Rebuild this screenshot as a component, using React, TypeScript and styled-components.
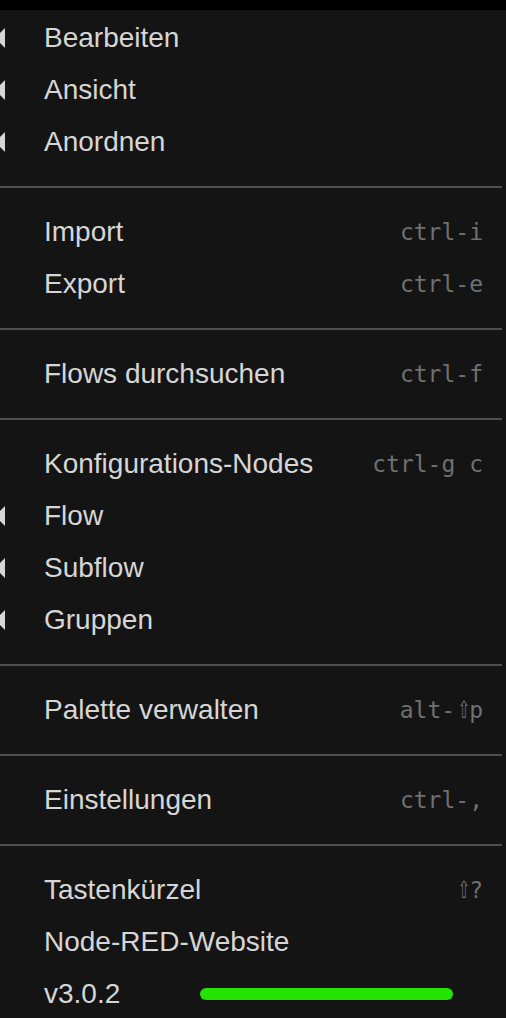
import React from "react";
import styled, { createGlobalStyle } from "styled-components";

const GlobalStyle = createGlobalStyle`
  html, body {
    margin: 0;
    padding: 0;
    background: #141414;
    overflow: hidden;
  }
`;

const TopBar = styled.div`
  height: 10px;
  background: #000;
`;

const Menu = styled.ul`
  list-style: none;
  margin: 0;
  padding: 2px 0 0 0;
  width: 502px;
  background: #141414;
  font-family: "Liberation Sans", Arial, sans-serif;
  font-size: 28px;
  color: #d6d6d6;
`;

const Item = styled.li<{ $submenu?: boolean }>`
  position: relative;
  display: flex;
  align-items: center;
  justify-content: space-between;
  height: 52px;
  padding: 0 19px 0 45px;
  box-sizing: border-box;

  &::before {
    content: "";
    display: ${(p) => (p.$submenu ? "block" : "none")};
    position: absolute;
    left: -5px;
    top: 50%;
    margin-top: -10px;
    border-style: solid;
    border-width: 10px 10px 10px 0;
    border-color: transparent #d6d6d6 transparent transparent;
  }
`;

const Label = styled.span`
  margin-left: -1px;
`;

const Shortcut = styled.span`
  font-family: "DejaVu Sans Mono", "Liberation Mono", monospace;
  font-size: 23px;
  color: #707070;
  white-space: pre;
`;

const Shift = styled.span`
  display: inline-block;
  width: 14px;
  text-align: center;
  font-family: "DejaVu Sans", sans-serif;
  font-size: 24px;
  transform: scaleX(0.62);
`;

const Divider = styled.li`
  height: 2px;
  margin: 18px 0;
  background: #4f4f4f;
`;

const Progress = styled.div`
  width: 253px;
  height: 12px;
  border-radius: 6px;
  background: #22e400;
  margin-right: 30px;
`;

type Entry = { label: string; key?: string; sub?: boolean } | "divider";

const entries: Entry[] = [
  { label: "Bearbeiten", sub: true },
  { label: "Ansicht", sub: true },
  { label: "Anordnen", sub: true },
  "divider",
  { label: "Import", key: "ctrl-i" },
  { label: "Export", key: "ctrl-e" },
  "divider",
  { label: "Flows durchsuchen", key: "ctrl-f" },
  "divider",
  { label: "Konfigurations-Nodes", key: "ctrl-g c" },
  { label: "Flow", sub: true },
  { label: "Subflow", sub: true },
  { label: "Gruppen", sub: true },
  "divider",
  { label: "Palette verwalten", key: "alt-⇧p" },
  "divider",
  { label: "Einstellungen", key: "ctrl-," },
  "divider",
  { label: "Tastenkürzel", key: "⇧?" },
  { label: "Node-RED-Website" },
];

// render the shift arrow with a font that has a full-size glyph
const renderKey = (key: string) =>
  key.split(/(⇧)/).map((part, i) =>
    part === "⇧" ? <Shift key={i}>⇧</Shift> : part
  );

export default function App() {
  return (
    <>
      <GlobalStyle />
      <TopBar />
      <Menu>
        {entries.map((e, i) =>
          e === "divider" ? (
            <Divider key={i} />
          ) : (
            <Item key={i} $submenu={e.sub}>
              <Label>{e.label}</Label>
              {e.key && <Shortcut>{renderKey(e.key)}</Shortcut>}
            </Item>
          )
        )}
        <Item>
          <Label>v3.0.2</Label>
          <Progress />
        </Item>
      </Menu>
    </>
  );
}
